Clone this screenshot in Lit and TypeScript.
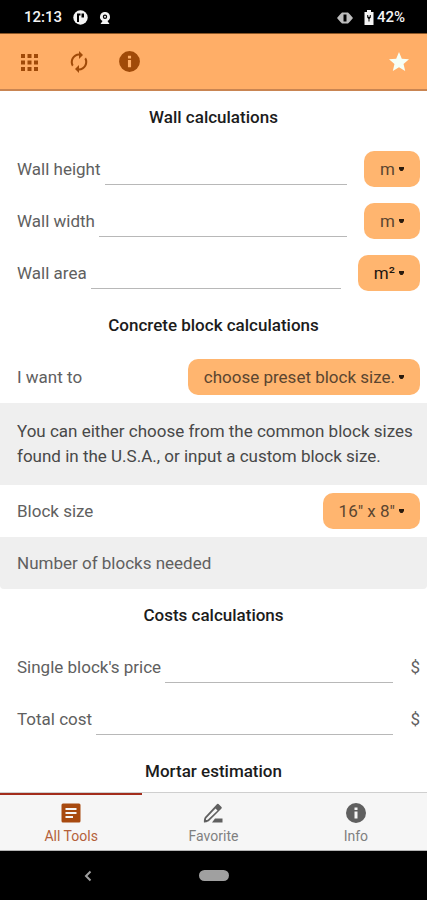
import { LitElement, html, css, svg } from "lit";
import { customElement, property, state } from "lit/decorators.js";
import { classMap } from "lit/directives/class-map.js";

const infoShape = svg`<path fill-rule="evenodd" d="M12 2a10 10 0 1 0 0 20 10 10 0 0 0 0-20zm-1.500 4.500h3v2.500h-3zm0 4h3v7h-3z"/>`;

@customElement("unit-select")
class UnitSelect extends LitElement {
  @property({ type: Array }) options: string[] = [];
  @property() name = "";
  @property({ type: Boolean }) strong = false;

  static styles = css`
    :host {
      display: block;
      flex: none;
    }
    .pill {
      display: flex;
      align-items: center;
      gap: 4px;
      height: 36px;
      padding: 0 16px;
      border-radius: 10px;
      background: #ffb56f;
      color: #5b4530;
    }
    .strong {
      color: #1c1510;
    }
    .choice {
      appearance: none;
      field-sizing: content;
      border: 0;
      margin: 0;
      padding: 0;
      background: transparent;
      color: inherit;
      font: inherit;
      height: 36px;
    }
    .arrow {
      width: 5px;
      height: 5px;
      fill: #2a1b0e;
      pointer-events: none;
    }
  `;

  render() {
    return html`<div class=${classMap({ pill: true, strong: this.strong })}>
      <select class="choice" aria-label=${this.name}>
        ${this.options.map((o) => html`<option>${o}</option>`)}
      </select>
      <svg class="arrow" viewBox="0 0 5 5" aria-hidden="true"><path d="M0 0h5v2L3.500 4h-2L0 2z" /></svg>
    </div>`;
  }
}

@customElement("app-root")
class AppRoot extends LitElement {
  @state() private tab = 0;

  static styles = css`
    :host {
      display: flex;
      flex-direction: column;
      height: 100vh;
      overflow: hidden;
      background: #fff;
      color: #606060;
      font-family: Roboto, "Liberation Sans", sans-serif;
      font-size: 17px;
      line-height: 25px;
    }
    svg {
      display: block;
      fill: currentColor;
    }
    button {
      border: 0;
      margin: 0;
      padding: 0;
      background: transparent;
      color: inherit;
      font: inherit;
    }
    .status {
      display: flex;
      flex: none;
      align-items: center;
      height: 33px;
      padding: 2px 22px 0 24px;
      box-sizing: border-box;
      background: #000;
      color: #f4f4f4;
      font-size: 15px;
      font-weight: 500;
    }
    .status .left,
    .status .right {
      display: flex;
      align-items: center;
    }
    .status .left {
      gap: 11px;
      flex: 1;
    }
    .status .charge {
      margin: 0 3px 0 11px;
    }
    .toolbar {
      display: flex;
      flex: none;
      align-items: center;
      gap: 26px;
      height: 58px;
      padding: 0 16px 0 17px;
      box-sizing: border-box;
      background: #ffae67;
      border-top: 1px solid #8a5525;
      border-bottom: 2px solid #c98552;
      color: #a04a08;
    }
    .toolbar .star {
      margin-left: auto;
      color: #f6fff6;
    }
    .page {
      flex: 1;
      min-height: 0;
      overflow-y: auto;
      scrollbar-width: none;
    }
    .title {
      margin: 0;
      text-align: center;
      font-size: 17px;
      font-weight: 500;
      line-height: 52px;
      color: #1c1c1c;
    }
    .row {
      display: flex;
      align-items: center;
      height: 52px;
      padding: 0 7px 0 17px;
    }
    .label {
      flex: 1;
    }
    .field {
      display: flex;
      flex: 1;
      align-items: center;
      gap: 4px;
      margin-right: 17px;
      white-space: nowrap;
    }
    .entry {
      flex: 1;
      min-width: 0;
      height: 32px;
      box-sizing: border-box;
      border: 0;
      border-bottom: 1px solid #b8b8b8;
      padding: 0;
      background: transparent;
      color: inherit;
      font: inherit;
      outline: 0;
    }
    .note {
      margin: 0;
      padding: 16px 7px 16px 17px;
      background: #efefef;
      color: #484848;
    }
    .result {
      background: #efefef;
      border-radius: 0 0 4px 4px;
    }
    .tabs {
      display: flex;
      flex: none;
      height: 59px;
      box-sizing: border-box;
      border-top: 1px solid #cfcfcf;
      border-bottom: 1px solid #b5b5b5;
      background: #f6f6f6;
    }
    .tab {
      display: flex;
      flex: 1;
      flex-direction: column;
      align-items: center;
      padding-top: 6px;
      border-top: 2px solid transparent;
      font-size: 14px;
      line-height: 22px;
      color: #808080;
    }
    .tab svg {
      color: #606060;
    }
    .tab.on {
      border-top-color: #a32d1c;
      color: #b4613a;
    }
    .tab.on svg {
      color: #a84a10;
    }
    .system {
      display: flex;
      flex: none;
      align-items: center;
      justify-content: space-between;
      height: 49px;
      padding: 0 80px;
      background: #000;
      color: #a0a0a0;
    }
    .home {
      width: 30px;
      height: 11px;
      border-radius: 6px;
      background: #a0a0a0;
    }
    .spacer {
      width: 16px;
    }
  `;

  private entry(id: string, label: string, unit: unknown) {
    return html`<div class="row">
      <div class="field"><label for=${id}>${label}</label><input class="entry" id=${id} inputmode="decimal" /></div>
      ${unit}
    </div>`;
  }

  private tabButton(index: number, label: string, icon: unknown) {
    return html`<button
      class=${classMap({ tab: true, on: this.tab === index })}
      @click=${() => (this.tab = index)}
    >
      <svg width="24" height="24" viewBox="0 0 24 24" aria-hidden="true">${icon}</svg>${label}
    </button>`;
  }

  render() {
    return html`
      <div class="status">
        <div class="left">
          <span>12:13</span>
          <svg width="15" height="15" viewBox="0 0 15 15">
            <circle cx="7.500" cy="7.500" r="7.200" />
            <path d="M4 3.500h3.500v2H6V12H4zM8.500 3.500h2.500v4H8.500z" fill="#000" />
          </svg>
          <svg width="12" height="14" viewBox="0 0 12 14">
            <path fill-rule="evenodd" d="M6 1a4.800 4.800 0 0 1 2.500 9l2 3h-9l2-3A4.800 4.800 0 0 1 6 1zm0 2.600a2.200 2.200 0 1 0 0 4.400 2.200 2.200 0 0 0 0-4.400z" />
            <circle cx="6" cy="5.800" r="1" />
          </svg>
        </div>
        <div class="right">
          <svg width="16" height="14" viewBox="0 0 16 14">
            <path fill="#bdbdbd" fill-rule="evenodd" d="M0 7l3-3.500L5 1.500h6l2 2L16 7l-3 3.500-2 2H5l-2-2zM6.500 3.500v7h3v-7z" />
          </svg>
          <svg class="charge" width="10" height="15" viewBox="0 0 10 15">
            <path fill-rule="evenodd" d="M3 0h4v2h2.500v13h-9V2H3zM3.200 5v2.500l1.300 1.500v2.500h1V9l1.300-1.500V5h-1v1.800H4.200V5z" />
          </svg>
          <span>42%</span>
        </div>
      </div>
      <header class="toolbar">
        <button aria-label="All tools">
          <svg width="24" height="24" viewBox="0 0 24 24">
            <path d="M4 4h4v4H4zM10.500 4h4v4h-4zM17 4h4v4h-4zM4 10.500h4v4H4zM10.500 10.500h4v4h-4zM17 10.500h4v4h-4zM4 17h4v4H4zM10.500 17h4v4h-4zM17 17h4v4h-4z" />
          </svg>
        </button>
        <button aria-label="Reset">
          <svg width="24" height="24" viewBox="0 0 24 24">
            <path d="M12 5.500V9l4-4-4-4v2.500a8.600 8.600 0 0 0-7 13.100l1.500-1.500A6.600 6.600 0 0 1 12 5.500zM19 7.400l-1.500 1.500A6.600 6.600 0 0 1 12 18.500V15l-4 4 4 4v-2.500A8.600 8.600 0 0 0 19 7.400z" />
          </svg>
        </button>
        <button aria-label="About">
          <svg width="25" height="25" viewBox="0 0 24 24">${infoShape}</svg>
        </button>
        <button class="star" aria-label="Favorite">
          <svg width="24" height="24" viewBox="0 0 24 24">
            <path d="M12 17.270L18.180 21l-1.640-7.030L22 9.240l-7.190-.61L12 2 9.190 8.630 2 9.240l5.460 4.730L5.820 21z" />
          </svg>
        </button>
      </header>
      <main class="page">
        <h2 class="title">Wall calculations</h2>
        ${this.entry("height", "Wall height", html`<unit-select name="Height unit" .options=${["m"]}></unit-select>`)}
        ${this.entry("width", "Wall width", html`<unit-select name="Width unit" .options=${["m"]}></unit-select>`)}
        ${this.entry("area", "Wall area", html`<unit-select name="Area unit" strong .options=${["m²"]}></unit-select>`)}
        <h2 class="title">Concrete block calculations</h2>
        <div class="row">
          <span class="label">I want to</span>
          <unit-select name="I want to" .options=${["choose preset block size."]}></unit-select>
        </div>
        <p class="note">
          You can either choose from the common block sizes found in the U.S.A., or input a custom block size.
        </p>
        <div class="row">
          <span class="label">Block size</span>
          <unit-select name="Block size" .options=${['16" x 8"']}></unit-select>
        </div>
        <div class="row result"><span class="label">Number of blocks needed</span><output></output></div>
        <h2 class="title">Costs calculations</h2>
        ${this.entry("price", "Single block's price", html`<span>$</span>`)}
        ${this.entry("total", "Total cost", html`<span>$</span>`)}
        <h2 class="title">Mortar estimation</h2>
      </main>
      <nav class="tabs">
        ${this.tabButton(0, "All Tools", svg`<path fill-rule="evenodd" d="M4 2.500h16a1.500 1.500 0 0 1 1.500 1.500v16a1.500 1.500 0 0 1-1.500 1.500H4A1.500 1.500 0 0 1 2.500 20V4A1.500 1.500 0 0 1 4 2.500zM6.500 7v2h11V7zm0 4v2h11v-2zm0 4v2H14v-2z"/>`)}
        ${this.tabButton(1, "Favorite", svg`<path fill-rule="evenodd" d="M17.500 3l3 3a1 1 0 0 1 0 1.400L8 20c-2 1.500-5 1.500-5 1.500S2.500 18 4 16L16.100 3.100a1 1 0 0 1 1.400-.1zM14.500 7.500L5.500 17c-.6.700-.5 2-.5 2s1.400.1 2-.5l9.500-9zM14 17.500h7.500v4H11z"/>`)}
        ${this.tabButton(2, "Info", infoShape)}
      </nav>
      <div class="system">
        <button aria-label="Back">
          <svg width="16" height="16" viewBox="0 0 16 16">
            <path d="M10.500 3.500L6 8l4.500 4.500" fill="none" stroke="currentColor" stroke-width="2" />
          </svg>
        </button>
        <button class="home" aria-label="Home"></button>
        <span class="spacer"></span>
      </div>
    `;
  }
}
